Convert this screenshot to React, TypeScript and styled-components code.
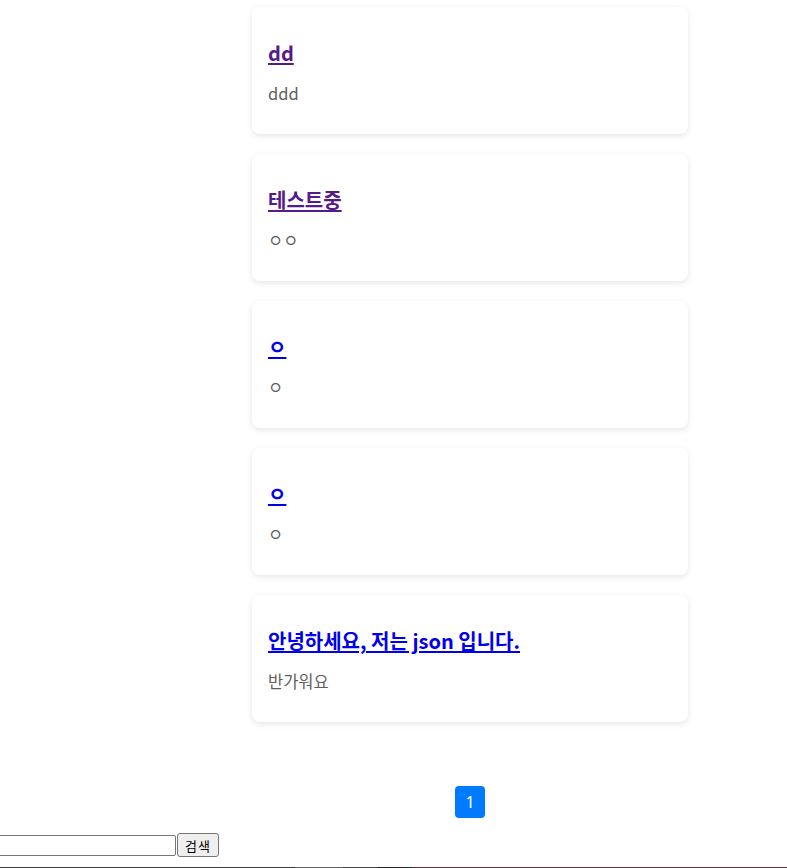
import React from 'react';
import styled, { createGlobalStyle } from 'styled-components';

const GlobalStyle = createGlobalStyle`
  html, body {
    margin: 0;
    padding: 0;
    background: #fff;
    overflow: hidden;
  }
  body {
    font-family: "Noto Sans", "Noto Sans CJK KR", sans-serif;
  }
`;

const Page = styled.div`
  width: 787px;
  height: 868px;
  display: flex;
  flex-direction: column;
  overflow: hidden;
`;

const PostList = styled.div`
  width: 436px;
  margin: 7px 0 0 252px;
  display: flex;
  flex-direction: column;
  gap: 20px;
`;

const Card = styled.div`
  background: #fff;
  border-radius: 8px;
  box-shadow: 0 2px 6px rgba(0, 0, 0, 0.1);
  padding: 16px;
`;

const Title = styled.h3`
  margin: 16px 0 15px;
  font-size: 20px;
  line-height: 27px;
  font-weight: 700;
  font-family: "Noto Sans CJK KR", "Noto Sans", sans-serif;
`;

const TitleLink = styled.a<{ $visited?: boolean }>`
  color: ${(p) => (p.$visited ? '#551a8b' : '#0000ee')};
  text-decoration: underline;
  text-underline-offset: 2px;
`;

const Excerpt = styled.p`
  margin: 0 0 13px;
  font-size: 16.5px;
  line-height: 24px;
  color: #5f5f5f;
  font-family: "Noto Sans CJK KR", "Noto Sans", sans-serif;
`;

const Pagination = styled.div`
  display: flex;
  justify-content: center;
  width: 436px;
  margin: 64px 0 0 252px;
`;

const PageButton = styled.button`
  width: 30px;
  height: 32px;
  border: none;
  border-radius: 4px;
  background: #007bff;
  color: #fff;
  font-size: 16px;
  font-family: "Noto Sans", sans-serif;
  padding: 0;
`;

const SearchForm = styled.form`
  display: flex;
  align-items: center;
  margin: 15px 0 0 -30px;
  height: 24px;
`;

const SearchInput = styled.input`
  box-sizing: border-box;
  width: 206px;
  height: 21px;
  border: 1px solid #767676;
  border-radius: 2px;
  padding: 1px 2px;
`;

const SearchButton = styled.button`
  box-sizing: border-box;
  height: 24px;
  width: 42px;
  margin-left: 1px;
  padding: 0 6px;
  border: 1px solid #767676;
  border-radius: 3px;
  background: #efefef;
  color: #000;
  font-size: 13px;
  letter-spacing: 1px;
  font-family: "Noto Sans CJK KR", sans-serif;
`;

const BottomStrip = styled.div`
  margin-top: 10px;
  height: 2px;
  background: linear-gradient(
    to right,
    #3b3b3b 0,
    #3b3b3b 295px,
    #666 295px,
    #666 343px,
    #444 343px,
    #444 378px,
    #222 378px,
    #2a2a2a 412px,
    #6b2a3d 412px,
    #6b2a3d 100%
  );
`;

const posts = [
  { title: 'dd', body: 'ddd', visited: true },
  { title: '테스트중', body: 'ㅇㅇ', visited: true },
  { title: 'ㅇ', body: 'ㅇ', visited: false },
  { title: 'ㅇ', body: 'ㅇ', visited: false },
  { title: '안녕하세요, 저는 json 입니다.', body: '반가워요', visited: false },
];

export default function App() {
  return (
    <Page>
      <GlobalStyle />
      <PostList>
        {posts.map((p, i) => (
          <Card key={i}>
            <Title>
              <TitleLink href="#" $visited={p.visited}>
                {p.title}
              </TitleLink>
            </Title>
            <Excerpt>{p.body}</Excerpt>
          </Card>
        ))}
      </PostList>
      <Pagination>
        <PageButton>1</PageButton>
      </Pagination>
      <SearchForm onSubmit={(e) => e.preventDefault()}>
        <SearchInput type="text" />
        <SearchButton type="submit">검색</SearchButton>
      </SearchForm>
      <BottomStrip />
    </Page>
  );
}
